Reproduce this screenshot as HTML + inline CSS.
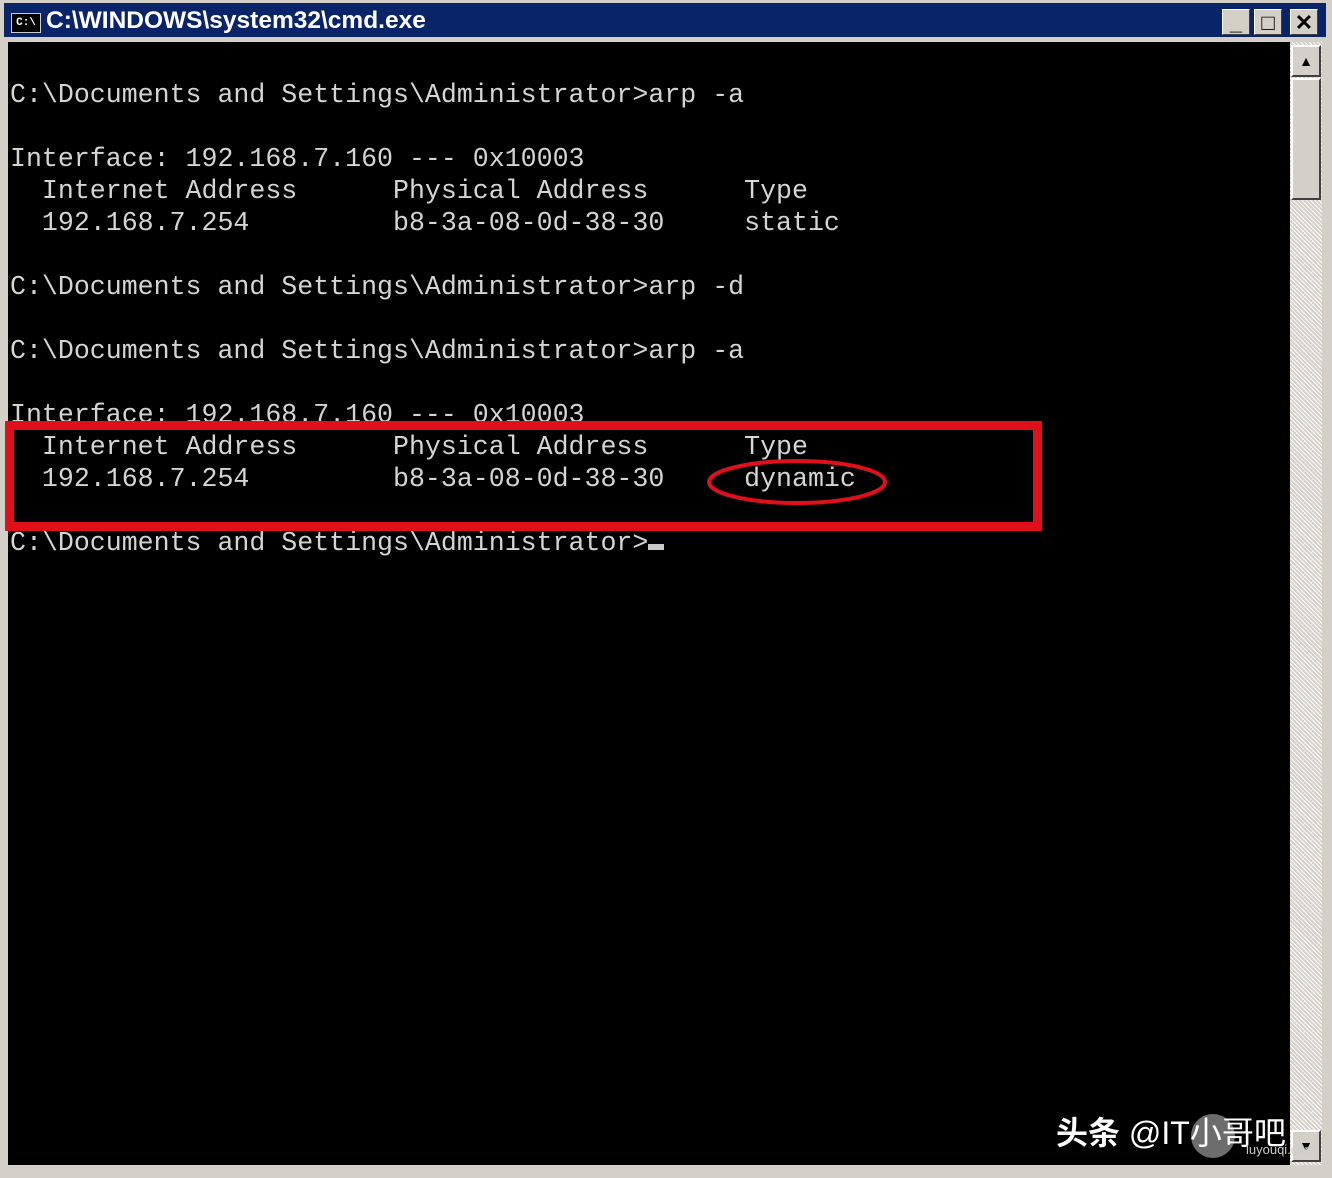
<!DOCTYPE html>
<html><head><meta charset="utf-8"><style>
body{margin:0;width:1332px;height:1178px;background:#d4d0c8;position:relative;overflow:hidden}
.title{position:absolute;left:4px;top:3px;width:1322px;height:34px;background:#0a246a}
.ttext{position:absolute;left:42px;top:4px;color:#fff;font:bold 24.5px "Liberation Sans",sans-serif}
.icon{position:absolute;left:7px;top:10px;width:28px;height:18px;background:#000;border:1px solid #ccc;color:#fff;font:bold 11px "Liberation Mono",monospace;line-height:18px;text-align:center}
.btn{position:absolute;top:6px;width:28px;height:26px;background:#d4d0c8;border:1px solid #fff;border-right-color:#404040;border-bottom-color:#404040;box-sizing:border-box;font:bold 22px "Liberation Sans",sans-serif;text-align:center;line-height:26px;color:#000}
.con{position:absolute;left:8px;top:42px;width:1282px;height:1123px;background:#000}
pre{position:absolute;left:2px;top:5px;margin:0;color:#d4d4d4;font:26.6px "Liberation Mono",monospace;line-height:32px;letter-spacing:0}
.sb{position:absolute;left:1290px;top:42px;width:32px;height:1123px;background:repeating-linear-gradient(45deg,#fff 0 1px,#d4d0c8 1px 3px)}
.sbb{position:absolute;left:1px;width:30px;background:#d4d0c8;border:2px solid #fff;border-right-color:#404040;border-bottom-color:#404040;box-sizing:border-box}
</style></head><body>
<div class="title"><div class="icon">C:\</div><div class="ttext">C:\WINDOWS\system32\cmd.exe</div>
<div class="btn" style="left:1218px">_</div><div class="btn" style="left:1250px">□</div><div class="btn" style="left:1286px">✕</div></div>
<div class="con"><pre>&nbsp;
C:\Documents and Settings\Administrator>arp -a

Interface: 192.168.7.160 --- 0x10003
  Internet Address      Physical Address      Type
  192.168.7.254         b8-3a-08-0d-38-30     static

C:\Documents and Settings\Administrator>arp -d

C:\Documents and Settings\Administrator>arp -a

Interface: 192.168.7.160 --- 0x10003
  Internet Address      Physical Address      Type
  192.168.7.254         b8-3a-08-0d-38-30     dynamic

C:\Documents and Settings\Administrator><span style="display:inline-block;width:16px;height:6px;background:#c8c8c8"></span></pre></div>
<div class="sb">
<div class="sbb" style="top:3px;height:32px;text-align:center;font:14px sans-serif;line-height:28px">▲</div>
<div class="sbb" style="top:36px;height:122px"></div>
<div class="sbb" style="top:1088px;height:32px;text-align:center;font:14px sans-serif;line-height:28px">▼</div>
</div>
<div style="position:absolute;left:5px;top:421px;width:1037px;height:110px;border:9px solid #e0101a;box-sizing:border-box"></div>
<svg style="position:absolute;left:0;top:0" width="1332" height="1178"><ellipse cx="797" cy="482" rx="88" ry="21" fill="none" stroke="#e0101a" stroke-width="4"/>
<circle cx="1213" cy="1136" r="22" fill="#888" opacity="0.8"/></svg>
<div style="position:absolute;left:1056px;top:1108px;color:#fff;font:bold 32px 'Liberation Sans','Noto Sans CJK SC',sans-serif">头条 <span style="font-weight:normal">@IT小哥吧</span></div>
<div style="position:absolute;left:1246px;top:1142px;color:#ccc;font:13px 'Liberation Sans',sans-serif">luyouqi.com</div>
</body></html>
